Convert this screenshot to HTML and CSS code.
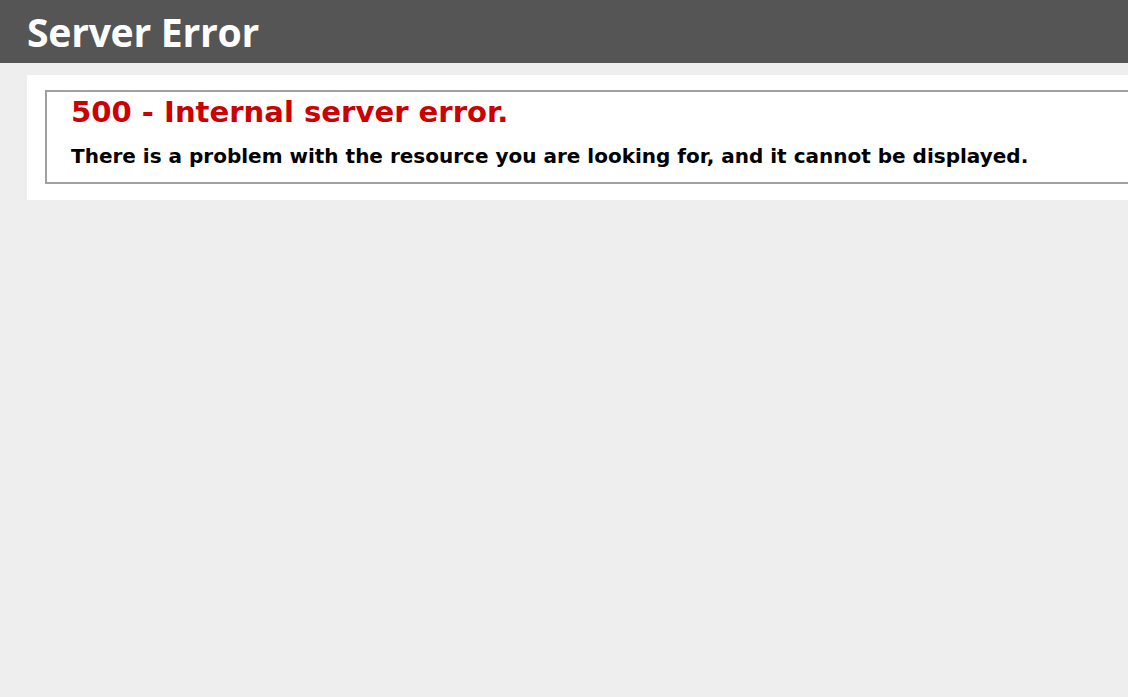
FILE: index.html
```html
<!DOCTYPE html>
<html lang="en">
<head>
<meta charset="utf-8">
<title>500 - Internal server error.</title>
<link rel="stylesheet" href="styles.css">
</head>
<body>
<div class="header"><h1 class="title">Server Error</h1></div>
<div class="content">
  <div class="content-container">
    <fieldset class="box">
      <h2 class="error-title">500 - Internal server error.</h2>
      <h3 class="error-text">There is a problem with the resource you are looking for, and it cannot be displayed.</h3>
    </fieldset>
  </div>
</div>
</body>
</html>
```

FILE: styles.css
```css
html, body {
  overflow: hidden;
}
body {
  margin: 0;
  background: #eeeeee;
  font-family: "DejaVu Sans", Verdana, sans-serif;
  height: 697px;
}
.header {
  background: #555555;
  color: #fff;
  height: 63px;
  padding: 0 0 0 27px;
  box-sizing: border-box;
  display: flex;
  align-items: center;
}
.title {
  margin: 0;
  font-family: "Open Sans", "Trebuchet MS", sans-serif;
  font-weight: 700;
  font-size: 39.2px;
  line-height: 1;
  letter-spacing: -0.3px;
}
.content {
  margin: 12px 0 0 27px;
}
.content-container {
  background: #fff;
  width: calc(100% + 200px);
  padding: 15px 0 16px 18px;
}
.box {
  margin: 0;
  padding: 0 22px 16px 26px;
  border: none;
  min-width: 0;
  box-shadow: inset 2px 2px 0 #a0a0a0, inset -2px -2px 0 #a0a0a0;
}
.error-title {
  margin: 5px 0 0 0;
  color: #cc0000;
  font-size: 29.1px;
  font-weight: 700;
  line-height: 34px;
}
.error-text {
  margin: 15px 0 0 0;
  color: #000;
  font-size: 20px;
  font-weight: 700;
  line-height: 24px;
}
```
